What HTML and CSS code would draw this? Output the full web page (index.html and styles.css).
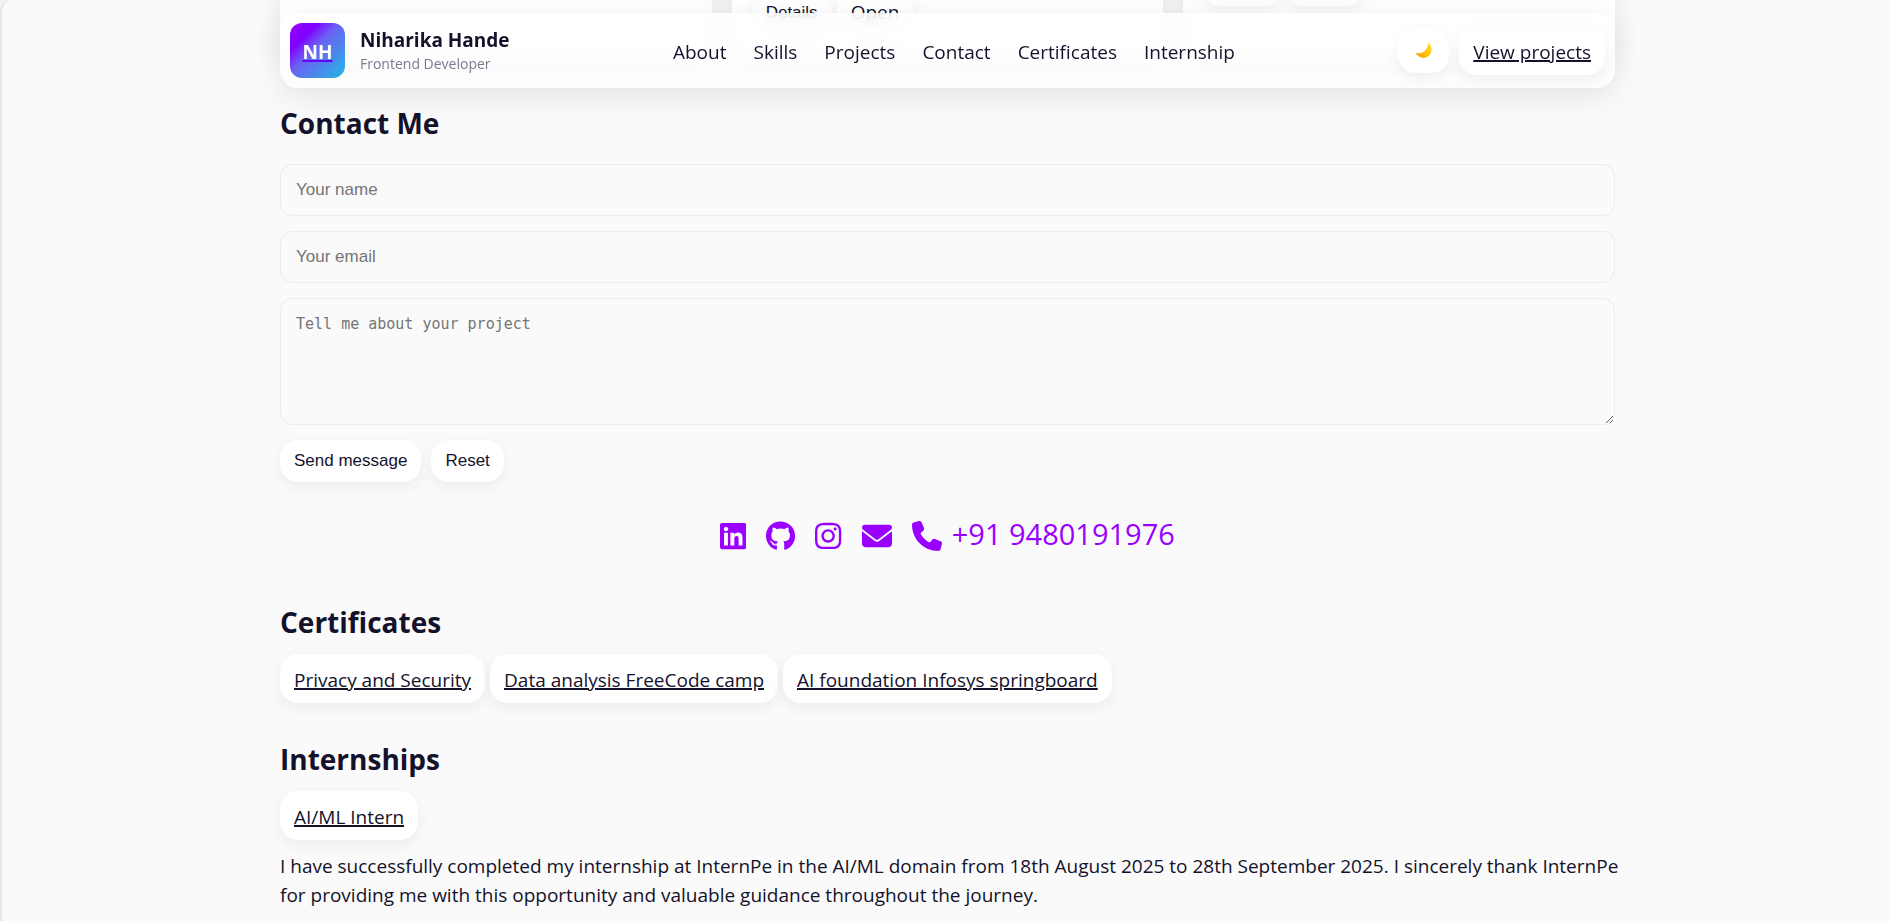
FILE: index.html
```html
<!DOCTYPE html>
<html lang="en">
<head>
<meta charset="utf-8">
<meta name="viewport" content="width=device-width, initial-scale=1">
<title>Niharika Hande</title>
<link rel="stylesheet" href="styles.css">
</head>
<body>
<header class="topbar">
  <a class="brand" href="#top">
    <span class="logo">NH</span>
    <span class="brand-text">
      <span class="brand-name">Niharika Hande</span>
      <span class="brand-role">Frontend Developer</span>
    </span>
  </a>
  <nav class="nav" aria-label="Main">
    <a href="#about">About</a>
    <a href="#skills">Skills</a>
    <a href="#projects">Projects</a>
    <a href="#contact">Contact</a>
    <a href="#certificates">Certificates</a>
    <a href="#internship">Internship</a>
  </nav>
  <div class="tools">
    <button class="btn theme" type="button" aria-label="Toggle theme">
      <svg width="17" height="17" viewBox="0 0 17 17" aria-hidden="true">
        <defs><linearGradient id="moon" x1="0" y1="1" x2="1" y2="0"><stop offset="0" stop-color="#f59a0c"/><stop offset=".5" stop-color="#ffc414"/><stop offset="1" stop-color="#ffe21c"/></linearGradient></defs>
        <path fill="url(#moon)" d="M13.2.5c4 3.600 4.600 9.500 1 13C10.500 17.400 3.400 16.800.4 10.600c3.400 1.200 7 .6 9.500-1.900C12.300 6.400 13.300 3.500 13.200.5z"/>
      </svg>
    </button>
    <a class="btn" href="#projects">View projects</a>
  </div>
</header>

<main class="page" id="top">
  <section class="projects" id="projects">
    <article class="card"></article>
    <article class="card">
      <div class="actions actions-low">
        <button class="btn" type="button">Details</button>
        <a class="btn btn-plain" href="#open">Open</a>
      </div>
    </article>
    <article class="card">
      <div class="actions">
        <button class="btn btn-blank" type="button" aria-label="Details"></button>
        <button class="btn btn-blank" type="button" aria-label="Open"></button>
      </div>
    </article>
  </section>

  <section class="section" id="contact">
    <h2>Contact Me</h2>
    <form class="form">
      <input type="text" name="name" placeholder="Your name" aria-label="Your name">
      <input type="email" name="email" placeholder="Your email" aria-label="Your email">
      <textarea name="message" placeholder="Tell me about your project" aria-label="Tell me about your project"></textarea>
      <div class="form-actions">
        <button class="btn" type="submit">Send message</button>
        <button class="btn" type="reset">Reset</button>
      </div>
    </form>
    <div class="social">
      <a href="#linkedin" aria-label="LinkedIn"><svg viewBox="0 0 448 512"><path d="M416 32H31.900C14.300 32 0 46.500 0 64.300v383.400C0 465.500 14.300 480 31.900 480H416c17.600 0 32-14.500 32-32.300V64.300c0-17.800-14.400-32.300-32-32.300zM135.400 416H69V202.200h66.500V416zm-33.200-243c-21.300 0-38.500-17.300-38.500-38.500S80.900 96 102.200 96c21.200 0 38.500 17.300 38.500 38.500 0 21.300-17.200 38.500-38.500 38.500zm282.100 243h-66.400V312c0-24.800-.5-56.700-34.500-56.700-34.600 0-39.900 27-39.900 54.900V416h-66.400V202.200h63.700v29.200h.9c8.900-16.800 30.600-34.500 62.900-34.500 67.200 0 79.700 44.300 79.700 101.900V416z"/></svg></a>
      <a href="#github" aria-label="GitHub"><svg viewBox="0 0 496 512"><path d="M165.900 397.400c0 2-2.300 3.600-5.200 3.600-3.300.3-5.600-1.300-5.600-3.600 0-2 2.300-3.600 5.200-3.600 3-.3 5.600 1.300 5.600 3.600zm-31.100-4.500c-.7 2 1.300 4.300 4.300 4.900 2.600 1 5.600 0 6.200-2s-1.300-4.300-4.300-5.200c-2.600-.7-5.500.3-6.200 2.300zm44.200-1.700c-2.900.7-4.900 2.600-4.600 4.900.3 2 2.900 3.300 5.900 2.600 2.900-.7 4.900-2.600 4.600-4.600-.3-1.900-3-3.200-5.900-2.900zM244.800 8C106.100 8 0 113.300 0 252c0 110.900 69.800 205.800 169.500 239.200 12.800 2.300 17.300-5.600 17.300-12.100 0-6.200-.3-40.400-.3-61.400 0 0-70 15-84.700-29.800 0 0-11.400-29.100-27.800-36.600 0 0-22.900-15.700 1.600-15.400 0 0 24.900 2 38.600 25.800 21.900 38.600 58.600 27.500 72.900 20.900 2.300-16 8.800-27.100 16-33.700-55.900-6.200-112.300-14.300-112.300-110.500 0-27.500 7.600-41.300 23.600-58.900-2.600-6.500-11.100-33.300 2.600-67.900 20.900-6.500 69 27 69 27 20-5.600 41.500-8.500 62.800-8.500s42.800 2.900 62.800 8.500c0 0 48.100-33.600 69-27 13.700 34.700 5.200 61.400 2.600 67.900 16 17.700 25.800 31.500 25.800 58.900 0 96.500-58.900 104.200-114.800 110.500 9.200 7.900 17 22.900 17 46.400 0 33.700-.3 75.400-.3 83.600 0 6.500 4.600 14.400 17.300 12.100C428.200 457.800 496 362.900 496 252 496 113.300 383.500 8 244.800 8z"/></svg></a>
      <a href="#instagram" aria-label="Instagram"><svg viewBox="0 0 448 512"><path d="M224.100 141c-63.600 0-114.900 51.300-114.900 114.900s51.300 114.900 114.900 114.900S339 319.500 339 255.900 287.700 141 224.100 141zm0 189.600c-41.100 0-74.700-33.500-74.700-74.700s33.500-74.700 74.700-74.700 74.700 33.500 74.700 74.700-33.600 74.700-74.700 74.700zm146.400-194.300c0 14.900-12 26.800-26.800 26.800-14.900 0-26.800-12-26.800-26.800s12-26.800 26.800-26.800 26.800 12 26.800 26.800zm76.100 27.200c-1.700-35.900-9.900-67.700-36.200-93.900-26.200-26.200-58-34.400-93.900-36.200-37-2.100-147.900-2.100-184.900 0-35.800 1.700-67.600 9.900-93.900 36.100s-34.400 58-36.200 93.900c-2.100 37-2.100 147.900 0 184.900 1.700 35.900 9.900 67.700 36.200 93.900s58 34.400 93.900 36.200c37 2.100 147.900 2.100 184.900 0 35.900-1.700 67.700-9.900 93.900-36.200 26.200-26.200 34.400-58 36.200-93.900 2.100-37 2.100-147.800 0-184.800zM398.800 388c-7.800 19.600-22.900 34.700-42.600 42.600-29.500 11.700-99.500 9-132.100 9s-102.700 2.600-132.100-9c-19.600-7.800-34.700-22.900-42.600-42.600-11.700-29.500-9-99.500-9-132.100s-2.600-102.700 9-132.100c7.800-19.600 22.900-34.700 42.600-42.600 29.500-11.700 99.500-9 132.100-9s102.700-2.600 132.100 9c19.600 7.800 34.700 22.900 42.600 42.600 11.700 29.500 9 99.500 9 132.100s2.700 102.700-9 132.100z"/></svg></a>
      <a href="#mail" aria-label="Email"><svg viewBox="0 0 512 512"><path d="M48 64C21.500 64 0 85.500 0 112c0 15.100 7.100 29.300 19.200 38.400L236.800 313.600c11.400 8.500 27 8.500 38.400 0L492.800 150.400c12.100-9.100 19.200-23.300 19.200-38.400c0-26.500-21.500-48-48-48H48zM0 176V384c0 35.300 28.700 64 64 64H448c35.300 0 64-28.700 64-64V176L294.400 339.200c-22.800 17.100-54 17.100-76.800 0L0 176z"/></svg></a>
      <a class="phone" href="#phone"><svg viewBox="0 0 512 512" aria-hidden="true"><path d="M164.900 24.600c-7.700-18.600-28-28.500-47.400-23.200l-88 24C12.100 30.200 0 46 0 64C0 311.400 200.600 512 448 512c18 0 33.800-12.100 38.600-29.500l24-88c5.300-19.400-4.600-39.700-23.200-47.400l-96-40c-16.300-6.800-35.200-2.100-46.300 11.600L304.700 368C234.300 334.700 177.300 277.700 144 207.300L193.300 167c13.700-11.200 18.400-30 11.600-46.300l-40-96z"/></svg><span class="phone-number">+91 9480191976</span></a>
    </div>
  </section>

  <section class="section" id="certificates">
    <h2>Certificates</h2>
    <div class="chips">
      <a class="btn" href="#privacy">Privacy and Security</a>
      <a class="btn" href="#data">Data analysis FreeCode camp</a>
      <a class="btn" href="#ai">AI foundation Infosys springboard</a>
    </div>
  </section>

  <section class="section" id="internship">
    <h2>Internships</h2>
    <div class="chips">
      <a class="btn" href="#intern">AI/ML Intern</a>
    </div>
    <p class="note">I have successfully completed my internship at InternPe in the AI/ML domain from 18th August 2025 to 28th September 2025. I sincerely thank InternPe for providing me with this opportunity and valuable guidance throughout the journey.</p>
  </section>
</main>
</body>
</html>
```

FILE: styles.css
```css
* { box-sizing: border-box; }

html { background: #f1f1f1; }

body {
  margin: 0;
  padding-left: 3px;
  min-height: 100vh;
  overflow: hidden;
  background: #fafafa;
  border-left: 2px solid #e6e6e6;
  border-bottom: 1px solid #ededed;
  border-radius: 12px 0 0 12px;
  color: #14122b;
  font: 19px/29px "Open Sans", "Noto Sans", sans-serif;
}

a { color: inherit; }

.topbar {
  position: fixed;
  z-index: 5;
  top: 13px;
  left: 5px;
  right: 0;
  width: calc(100% - 42px);
  max-width: 1335px;
  margin: 0 auto;
  padding: 10px;
  display: flex;
  align-items: center;
  justify-content: space-between;
  border-radius: 18px;
  background: linear-gradient(rgba(255, 255, 255, .8), rgba(255, 255, 255, .7));
  backdrop-filter: blur(8px);
  box-shadow: 0 8px 30px rgba(0, 0, 0, .09);
}

.brand {
  display: flex;
  align-items: center;
  gap: 15px;
  text-decoration: none;
}

.logo {
  width: 55px;
  height: 55px;
  display: grid;
  place-items: center;
  padding-top: 3px;
  border-radius: 12px;
  background: linear-gradient(135deg, #9b00ff, #8000ff 25%, #6a62f2 45%, #22b8e4);
  color: #fff;
  font-weight: 700;
  text-decoration: underline 2px #6a00ff;
}

.brand-text { display: flex; flex-direction: column; padding-top: 2px; }
.brand-name { font-weight: 700; line-height: 25px; }
.brand-role { font-size: 14px; line-height: 22px; color: #7b7a8c; }

.nav { display: flex; gap: 27px; padding-top: 3px; }
.nav a { text-decoration: none; }

.tools { display: flex; align-items: center; gap: 10px; }

.btn {
  display: inline-block;
  padding: 12px 14px 8px;
  border: 0;
  border-radius: 18px;
  background: #fff;
  color: #14122b;
  box-shadow: 0 5px 15px rgba(10, 10, 30, .06);
  text-decoration-thickness: 2px;
}

button.btn {
  height: 42px;
  padding: 10px 14px;
  font: 17px/22px "Liberation Sans", Arial, sans-serif;
}

button.theme {
  width: 51px;
  height: 45px;
  display: grid;
  place-items: center;
}

.btn-plain { padding: 10px 14px; text-decoration: none; }
.btn-blank { width: 78px; }

.page {
  max-width: 1335px;
  margin: -56px auto 0;
}

.projects {
  display: grid;
  grid-template-columns: repeat(3, 1fr);
  gap: 20px;
  margin-bottom: 10px;
}

.card {
  padding: 20px;
  border-radius: 18px;
  background: #fff;
  box-shadow: 0 8px 30px rgba(0, 0, 0, .08);
}

.actions { display: flex; gap: 5px; }
.actions-low { padding-top: 24px; align-items: center; }

.section { padding-top: 34px; }

h2 {
  margin: 0;
  font-size: 28px;
  line-height: 44px;
  font-weight: 700;
}

.form {
  display: flex;
  flex-direction: column;
  gap: 15px;
  padding-top: 19px;
}

.form input,
.form textarea {
  width: 100%;
  height: 52px;
  padding: 15px;
  border: 1px solid #ebebeb;
  border-radius: 12px;
  background: transparent;
  color: #14122b;
  font: 17px/20px "Liberation Sans", Arial, sans-serif;
}

.form textarea {
  height: 127px;
  font: 15px/20px "DejaVu Sans Mono", monospace;
}

.form ::placeholder { color: #757575; }

.form-actions { display: flex; gap: 10px; }

.social {
  display: flex;
  align-items: center;
  justify-content: center;
  gap: 20px;
  padding: 32px 0 8px;
  color: #9900ff;
  font-size: 29px;
  line-height: 40px;
}

.social a {
  display: flex;
  align-items: center;
  gap: 10px;
  text-decoration: none;
}

.social svg { height: 30px; fill: currentColor; }

.phone-number { padding-bottom: 4px; }

.chips { display: flex; gap: 5px; padding-top: 10px; }

/* lets the first line run slightly past the column edge before it wraps */
.note { margin: 12px -8px 17px 0; }
```
